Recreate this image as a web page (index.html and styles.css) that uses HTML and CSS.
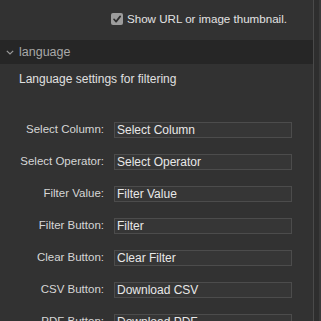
FILE: index.html
```html
<!DOCTYPE html>
<html lang="en">
<head>
    <meta charset="UTF-8">
    <meta name="viewport" content="width=device-width, initial-scale=1.0">
    <title>Filter Settings</title>
    <link rel="stylesheet" href="styles.css">
</head>
<body>

<div class="window">
    <div class="panel">
        <div class="optionRow">
            <label class="check">
                <span class="checkBox">
                    <svg width="12" height="12" viewBox="0 0 12 12">
                        <rect x="0" y="0" width="12" height="12" rx="2" fill="#9c9c9c"/>
                        <path d="M3 6.3 L5.1 8.6 L9.2 3.4" fill="none" stroke="#2e2e2e" stroke-width="1.7" stroke-linecap="round" stroke-linejoin="round"/>
                    </svg>
                </span>
                Show URL or image thumbnail.
            </label>
        </div>

        <div class="sectionHeader">
            <svg class="chevron" width="8" height="5" viewBox="0 0 8 5">
                <path d="M0.8 0.8 L4 4 L7.2 0.8" fill="none" stroke="#9a9a9a" stroke-width="1.2"/>
            </svg>
            <span>language</span>
        </div>

        <p class="sectionDesc">Language settings for filtering</p>

        <div class="fields">
            <div class="field">
                <label>Select Column:</label>
                <input type="text" value="Select Column">
            </div>
            <div class="field">
                <label>Select Operator:</label>
                <input type="text" value="Select Operator">
            </div>
            <div class="field">
                <label>Filter Value:</label>
                <input type="text" value="Filter Value">
            </div>
            <div class="field">
                <label>Filter Button:</label>
                <input type="text" value="Filter">
            </div>
            <div class="field">
                <label>Clear Button:</label>
                <input type="text" value="Clear Filter">
            </div>
            <div class="field">
                <label>CSV Button:</label>
                <input type="text" value="Download CSV">
            </div>
            <div class="field">
                <label>PDF Button:</label>
                <input type="text" value="Download PDF">
            </div>
        </div>
    </div>

    <div class="scrollbar"></div>
</div>

</body>
</html>
```

FILE: styles.css
```css
/* Global */
body {
    margin: 0;
    padding: 0;
    background: #323232;
    font-family: 'Liberation Sans', Arial, sans-serif;
    font-size: 12px;
    color: #dcdcdc;
    overflow: hidden;
}

.window {
    display: flex;
    height: 321px;
}

.panel {
    width: 313px;
    flex-shrink: 0;
}

/* Scrollbar track on the right */
.scrollbar {
    flex: 1;
    border-left: 1px solid #4a4a4a;
    background: #2e2e2e;
    box-shadow: inset -2px 0 0 #3a3a3a;
}

/* Checkbox option */
.optionRow {
    height: 40px;
    display: flex;
    justify-content: flex-end;
    align-items: flex-start;
    padding-right: 26px;
    box-sizing: border-box;
    padding-top: 12px;
}

.check {
    display: flex;
    align-items: center;
    gap: 4px;
    line-height: 14px;
    font-size: 11.6px;
    color: #e2e2e2;
}

.checkBox {
    display: flex;
    width: 12px;
    height: 12px;
}

/* Section header */
.sectionHeader {
    height: 24px;
    background: #262626;
    display: flex;
    align-items: center;
    padding-left: 6px;
    color: #a9a9a9;
    font-size: 12.5px;
}

.chevron {
    margin-right: 5px;
    margin-top: 1px;
}

.sectionDesc {
    margin: 7px 0 0 19px;
    line-height: 16px;
    color: #e0e0e0;
}

/* Form fields */
.fields {
    margin-top: 27px;
}

.field {
    display: grid;
    grid-template-columns: 104px 178px;
    column-gap: 10px;
    align-items: center;
    height: 32px;
}

.field label {
    text-align: right;
    color: #d6d6d6;
    font-size: 11.5px;
    margin-top: -2px;
}

.field input {
    height: 16px;
    box-sizing: border-box;
    margin: 0;
    padding: 0 2px;
    border: 1px solid #4c4c4c;
    background: #363636;
    color: #e8e8e8;
    font-family: 'Liberation Sans', Arial, sans-serif;
    font-size: 12px;
    outline: none;
}
```
